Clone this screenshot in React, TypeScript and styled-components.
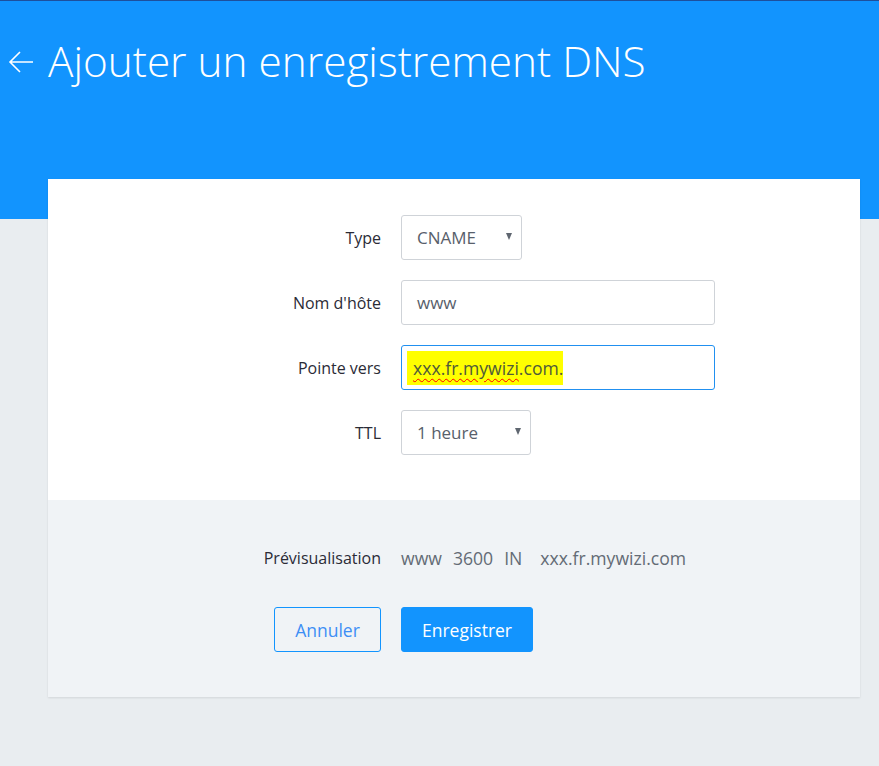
import styled, { createGlobalStyle } from 'styled-components';

const GlobalStyle = createGlobalStyle`
    html, body {
        margin: 0;
        padding: 0;
        background: #e9edf0;
        font-family: 'Open Sans', 'Liberation Sans', sans-serif;
    }
`;

const Page = styled.div`
    min-height: 766px;
    background: #e9edf0;
`;

const Header = styled.header`
    background: #1294fe;
    border-top: 1px solid #1d4f9c;
    height: 219px;
    box-sizing: border-box;
    padding: 30px 0 0 8px;
    margin-bottom: -40px;
`;

const Title = styled.h1`
    display: flex;
    align-items: center;
    gap: 14px;
    margin: 0;
    color: #fff;
    font-weight: 300;
    font-size: 42.3px;
    line-height: 60px;

    svg {
        flex: none;
        margin-top: 2px;
    }
`;

const Card = styled.section`
    margin: 0 19px 0 48px;
    background: #fff;
    box-shadow: 0 1px 2px rgba(0, 0, 0, 0.1);
`;

const Body = styled.div`
    padding: 36px 0 45px;
    display: flex;
    flex-direction: column;
    gap: 20px;
`;

const Footer = styled.div`
    background: #f0f3f6;
    padding: 46px 0 45px;
    display: flex;
    flex-direction: column;
    gap: 37px;
`;

const Row = styled.div`
    display: grid;
    grid-template-columns: 333px auto;
    column-gap: 20px;
    align-items: center;
`;

const Label = styled.label`
    text-align: right;
    font-size: 16px;
    color: #2b2b36;
`;

const Field = styled.div<{ width: number; focused?: boolean }>`
    width: ${p => p.width}px;
    height: 45px;
    box-sizing: border-box;
    border: 1px solid ${p => (p.focused ? '#2190f0' : '#cfd3d8')};
    border-radius: 3px;
    background: #fff;
    display: flex;
    align-items: center;
    padding: 0 15px;
    font-size: 17px;
    color: #58606b;
    position: relative;
`;

const Caret = styled.span`
    position: absolute;
    right: 9px;
    top: 17px;
    width: 0;
    height: 0;
    border-left: 3.5px solid transparent;
    border-right: 3.5px solid transparent;
    border-top: 7px solid #5f6670;
`;

const Highlight = styled.mark`
    background: #ffff00;
    color: #4f5a3a;
    font-size: 17.6px;
    margin-left: -10px;
    padding: 5px 0 5px 6px;
`;

const Misspelled = styled.span`
    text-decoration-line: underline;
    text-decoration-style: wavy;
    text-decoration-color: #ff0000;
    text-decoration-thickness: 1.2px;
    text-underline-offset: 3px;
`;

const Preview = styled.div`
    display: flex;
    font-size: 17.6px;
    color: #636b75;

    span + span {
        margin-left: 11px;
    }
    span.target {
        margin-left: 18px;
    }
`;

const Buttons = styled.div`
    display: grid;
    grid-template-columns: 333px auto;
    column-gap: 20px;
`;

const Button = styled.button<{ primary?: boolean }>`
    height: 45px;
    box-sizing: border-box;
    border-radius: 3px;
    font-family: inherit;
    font-size: 17.5px;
    cursor: pointer;
    border: 1px solid #1294fe;
    background: ${p => (p.primary ? '#1294fe' : 'transparent')};
    color: ${p => (p.primary ? '#fff' : '#3d8ef5')};
    padding: 0;
    justify-self: ${p => (p.primary ? 'start' : 'end')};
    width: ${p => (p.primary ? 132 : 107)}px;
`;

function Select({ value, width }: { value: string; width: number }) {
    return (
        <Field width={width}>
            {value}
            <Caret />
        </Field>
    );
}

export default function App() {
    return (
        <Page>
            <GlobalStyle />
            <Header>
                <Title>
                    <svg width="26" height="24" viewBox="0 0 26 24" fill="none" stroke="#fff" strokeWidth="1.6">
                        <path d="M25 12H2M12 2L2 12l10 10" />
                    </svg>
                    Ajouter un enregistrement DNS
                </Title>
            </Header>
            <Card>
                <Body>
                    <Row>
                        <Label>Type</Label>
                        <Select value="CNAME" width={121} />
                    </Row>
                    <Row>
                        <Label>Nom d'hôte</Label>
                        <Field width={314}>www</Field>
                    </Row>
                    <Row>
                        <Label>Pointe vers</Label>
                        <Field width={314} focused>
                            <Highlight>
                                <Misspelled>xxx.fr.mywizi</Misspelled>.com.
                            </Highlight>
                        </Field>
                    </Row>
                    <Row>
                        <Label>TTL</Label>
                        <Select value="1 heure" width={130} />
                    </Row>
                </Body>
                <Footer>
                    <Row>
                        <Label>Prévisualisation</Label>
                        <Preview>
                            <span>www</span>
                            <span>3600</span>
                            <span>IN</span>
                            <span className="target">xxx.fr.mywizi.com</span>
                        </Preview>
                    </Row>
                    <Buttons>
                        <Button>Annuler</Button>
                        <Button primary>Enregistrer</Button>
                    </Buttons>
                </Footer>
            </Card>
        </Page>
    );
}
